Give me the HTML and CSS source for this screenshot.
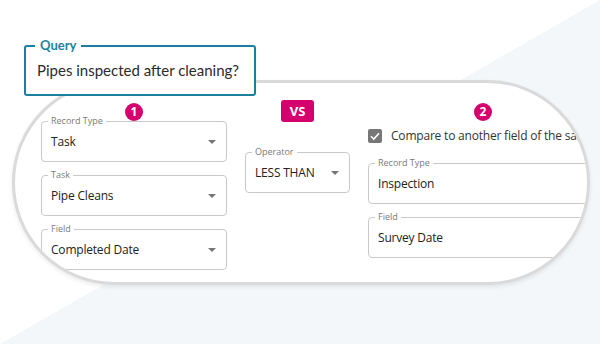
FILE: index.html
```html
<!DOCTYPE html>
<html>
<head>
  <title>Query Builder</title>
  <link rel="stylesheet" href="styles.css">
</head>
<body>
  <div class="stage">
    <div class="query">
      <span class="query-label">Query</span>
      Pipes inspected after cleaning?
    </div>

    <div class="pill">
      <div class="col col-left">
        <div class="badge">1</div>
        <div class="field">
          <span class="field-label">Record Type</span>
          <span class="field-value">Task</span>
          <span class="arrow"></span>
        </div>
        <div class="field">
          <span class="field-label">Task</span>
          <span class="field-value">Pipe Cleans</span>
          <span class="arrow"></span>
        </div>
        <div class="field">
          <span class="field-label">Field</span>
          <span class="field-value">Completed Date</span>
          <span class="arrow"></span>
        </div>
      </div>

      <div class="col col-mid">
        <div class="vs">VS</div>
        <div class="field operator">
          <span class="field-label">Operator</span>
          <span class="field-value">LESS THAN</span>
          <span class="arrow"></span>
        </div>
      </div>

      <div class="col col-right">
        <div class="badge">2</div>
        <div class="check-row">
          <span class="checkbox">
            <svg width="14" height="14" viewBox="0 0 14 14"><path d="M3 7.2 L5.8 10 L11 4.2" fill="none" stroke="#fff" stroke-width="1.6"/></svg>
          </span>
          <span class="check-label">Compare to another field of the same record</span>
        </div>
        <div class="field wide">
          <span class="field-label">Record Type</span>
          <span class="field-value">Inspection</span>
        </div>
        <div class="field wide">
          <span class="field-label">Field</span>
          <span class="field-value">Survey Date</span>
        </div>
      </div>
    </div>
  </div>
</body>
</html>
```

FILE: styles.css
```css
html, body {
  margin: 0;
  height: 344px;
  overflow: hidden;
}
body {
  font-family: "Open Sans", sans-serif;
  background: linear-gradient(to bottom right, #ffffff 50%, #f4f7fa 50%);
}
.stage {
  position: relative;
  padding-top: 80px;
  padding-left: 12px;
}
.query {
  position: absolute;
  left: 24px;
  top: 45px;
  width: 232px;
  height: 51px;
  box-sizing: border-box;
  border: 2px solid #1b7fa0;
  border-radius: 3px;
  background-color: white;
  padding: 14px 0 0 11px;
  font-family: Lato, sans-serif;
  font-size: 15px;
  color: #2b2b2b;
  z-index: 2;
}
.query-label {
  position: absolute;
  top: -10px;
  left: 9px;
  padding: 0 5px;
  background-color: white;
  color: #1b84a2;
  font-weight: bold;
  font-size: 13px;
}
.pill {
  width: 578px;
  height: 205px;
  box-sizing: border-box;
  border: 3px solid #dadada;
  border-radius: 103px;
  background-color: white;
  box-shadow: 0 2px 4px rgba(0,0,0,0.08);
  overflow: hidden;
  display: flex;
  gap: 18px;
  padding-left: 26px;
}
.col {
  display: flex;
  flex-direction: column;
  flex-shrink: 0;
}
.col-left {
  width: 186px;
  padding-top: 20px;
  gap: 13px;
}
.col-left .badge {
  margin-bottom: -13px;
}
.col-mid {
  width: 105px;
  padding-top: 17px;
}
.col-right {
  width: 230px;
  padding-top: 20px;
}
.badge {
  align-self: center;
  width: 18px;
  height: 18px;
  border-radius: 50%;
  background-color: #d5006d;
  color: white;
  font-weight: bold;
  font-size: 12px;
  line-height: 18px;
  text-align: center;
}
.vs {
  align-self: center;
  width: 33px;
  height: 22px;
  border-radius: 3px;
  background-color: #d5006d;
  color: white;
  font-weight: bold;
  font-size: 13px;
  line-height: 22px;
  text-align: center;
}
.field {
  position: relative;
  height: 41px;
  box-sizing: border-box;
  border: 1px solid #c9c9c9;
  border-radius: 4px;
  padding: 0 10px 0 9px;
  display: flex;
  align-items: center;
  justify-content: space-between;
}
.field-label {
  position: absolute;
  top: -7px;
  left: 6px;
  padding: 0 3px;
  background-color: white;
  font-size: 9px;
  line-height: 12px;
  color: #7a7a7a;
}
.field-value {
  font-size: 12px;
  letter-spacing: -0.2px;
  color: #222;
}
.arrow {
  width: 0;
  height: 0;
  border-left: 4px solid transparent;
  border-right: 4px solid transparent;
  border-top: 4px solid #757575;
}
.operator {
  margin-top: 30px;
}
.check-row {
  display: flex;
  align-items: center;
  margin-top: 6px;
  white-space: nowrap;
}
.checkbox {
  width: 14px;
  height: 14px;
  border-radius: 2px;
  background-color: #777;
  flex-shrink: 0;
}
.checkbox svg {
  display: block;
}
.check-label {
  margin-left: 9px;
  font-size: 12px;
  letter-spacing: -0.2px;
  color: #333;
}
.wide {
  width: 260px;
  margin-top: 19px;
}
.wide + .wide {
  margin-top: 13px;
}
```
